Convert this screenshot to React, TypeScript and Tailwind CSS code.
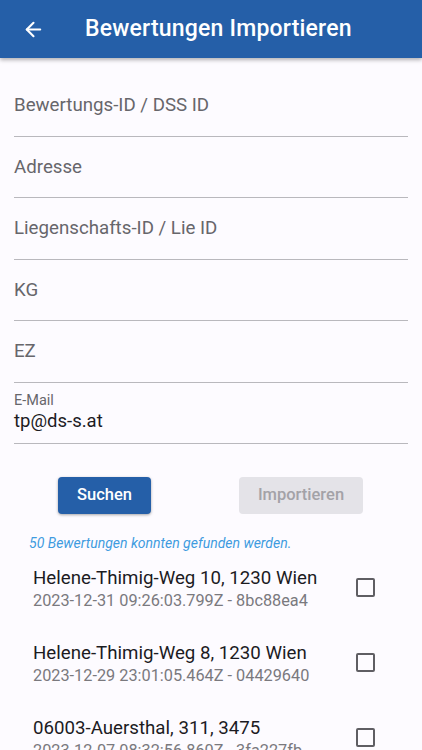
import { ArrowLeft } from 'lucide-react';

const fields = ['Bewertungs-ID / DSS ID', 'Adresse', 'Liegenschafts-ID / Lie ID', 'KG', 'EZ'];

const results = [
  { title: 'Helene-Thimig-Weg 10, 1230 Wien', sub: '2023-12-31 09:26:03.799Z - 8bc88ea4' },
  { title: 'Helene-Thimig-Weg 8, 1230 Wien', sub: '2023-12-29 23:01:05.464Z - 04429640' },
  { title: '06003-Auersthal, 311, 3475', sub: '2023-12-07 08:32:56.860Z - 3fa227fb' },
];

export default function App() {
  return (
    <div className="h-[750px] w-[422px] overflow-hidden bg-[#fdfbff] font-['Roboto',sans-serif]">
      <header className="relative z-10 flex h-[58px] items-center bg-[#255fa8] shadow-[0_2px_4px_rgba(0,0,0,0.3)]">
        <ArrowLeft className="ml-[22px] size-[23px] text-white" strokeWidth={2.2} />
        <h1 className="ml-[40px] text-[23px] font-medium tracking-[0.2px] text-white">Bewertungen Importieren</h1>
      </header>

      <div className="px-[14px] pt-[17px]">
        {fields.map(label => (
          <div key={label} className="flex h-[61.5px] items-center border-b border-[#b9b8bd] text-[18.7px] text-[#67666b]">
            {label}
          </div>
        ))}
        <div className="flex h-[61.5px] flex-col justify-end border-b border-[#b9b8bd] pb-[9px]">
          <span className="text-[14.5px] leading-[17px] text-[#67666b]">E-Mail</span>
          <span className="text-[18.5px] leading-[25px] text-[#1c1b1f]">tp@ds-s.at</span>
        </div>
      </div>

      <div className="mt-[33px] flex">
        <button
          type="button"
          className="ml-[58px] h-[37px] w-[93px] rounded-[4px] bg-[#255fa8] text-[16.5px] font-medium text-white shadow-[0_1px_3px_rgba(0,0,0,0.35)]">
          Suchen
        </button>
        <button
          type="button"
          className="ml-[88px] h-[37px] w-[124px] rounded-[4px] bg-[#e4e3e8] text-[16.5px] font-medium text-[#a3a2a7]">
          Importieren
        </button>
      </div>

      <p className="ml-[29px] mt-[19px] text-[14px] italic text-[#3f9be0]">50 Bewertungen konnten gefunden werden.</p>

      <div className="mt-[12px]">
        {results.map(item => (
          <div key={item.sub} className="flex h-[75px] items-start pl-[33px] pr-[47px]">
            <div className="flex-1">
              <div className="text-[18.7px] leading-[24px] text-[#1c1b1f]">{item.title}</div>
              <div className="text-[16.3px] leading-[21px] text-[#7a797e]">{item.sub}</div>
            </div>
            <div className="mt-[12px] size-[19px] rounded-[2px] border-2 border-[#5f5e63]" />
          </div>
        ))}
      </div>
    </div>
  );
}
